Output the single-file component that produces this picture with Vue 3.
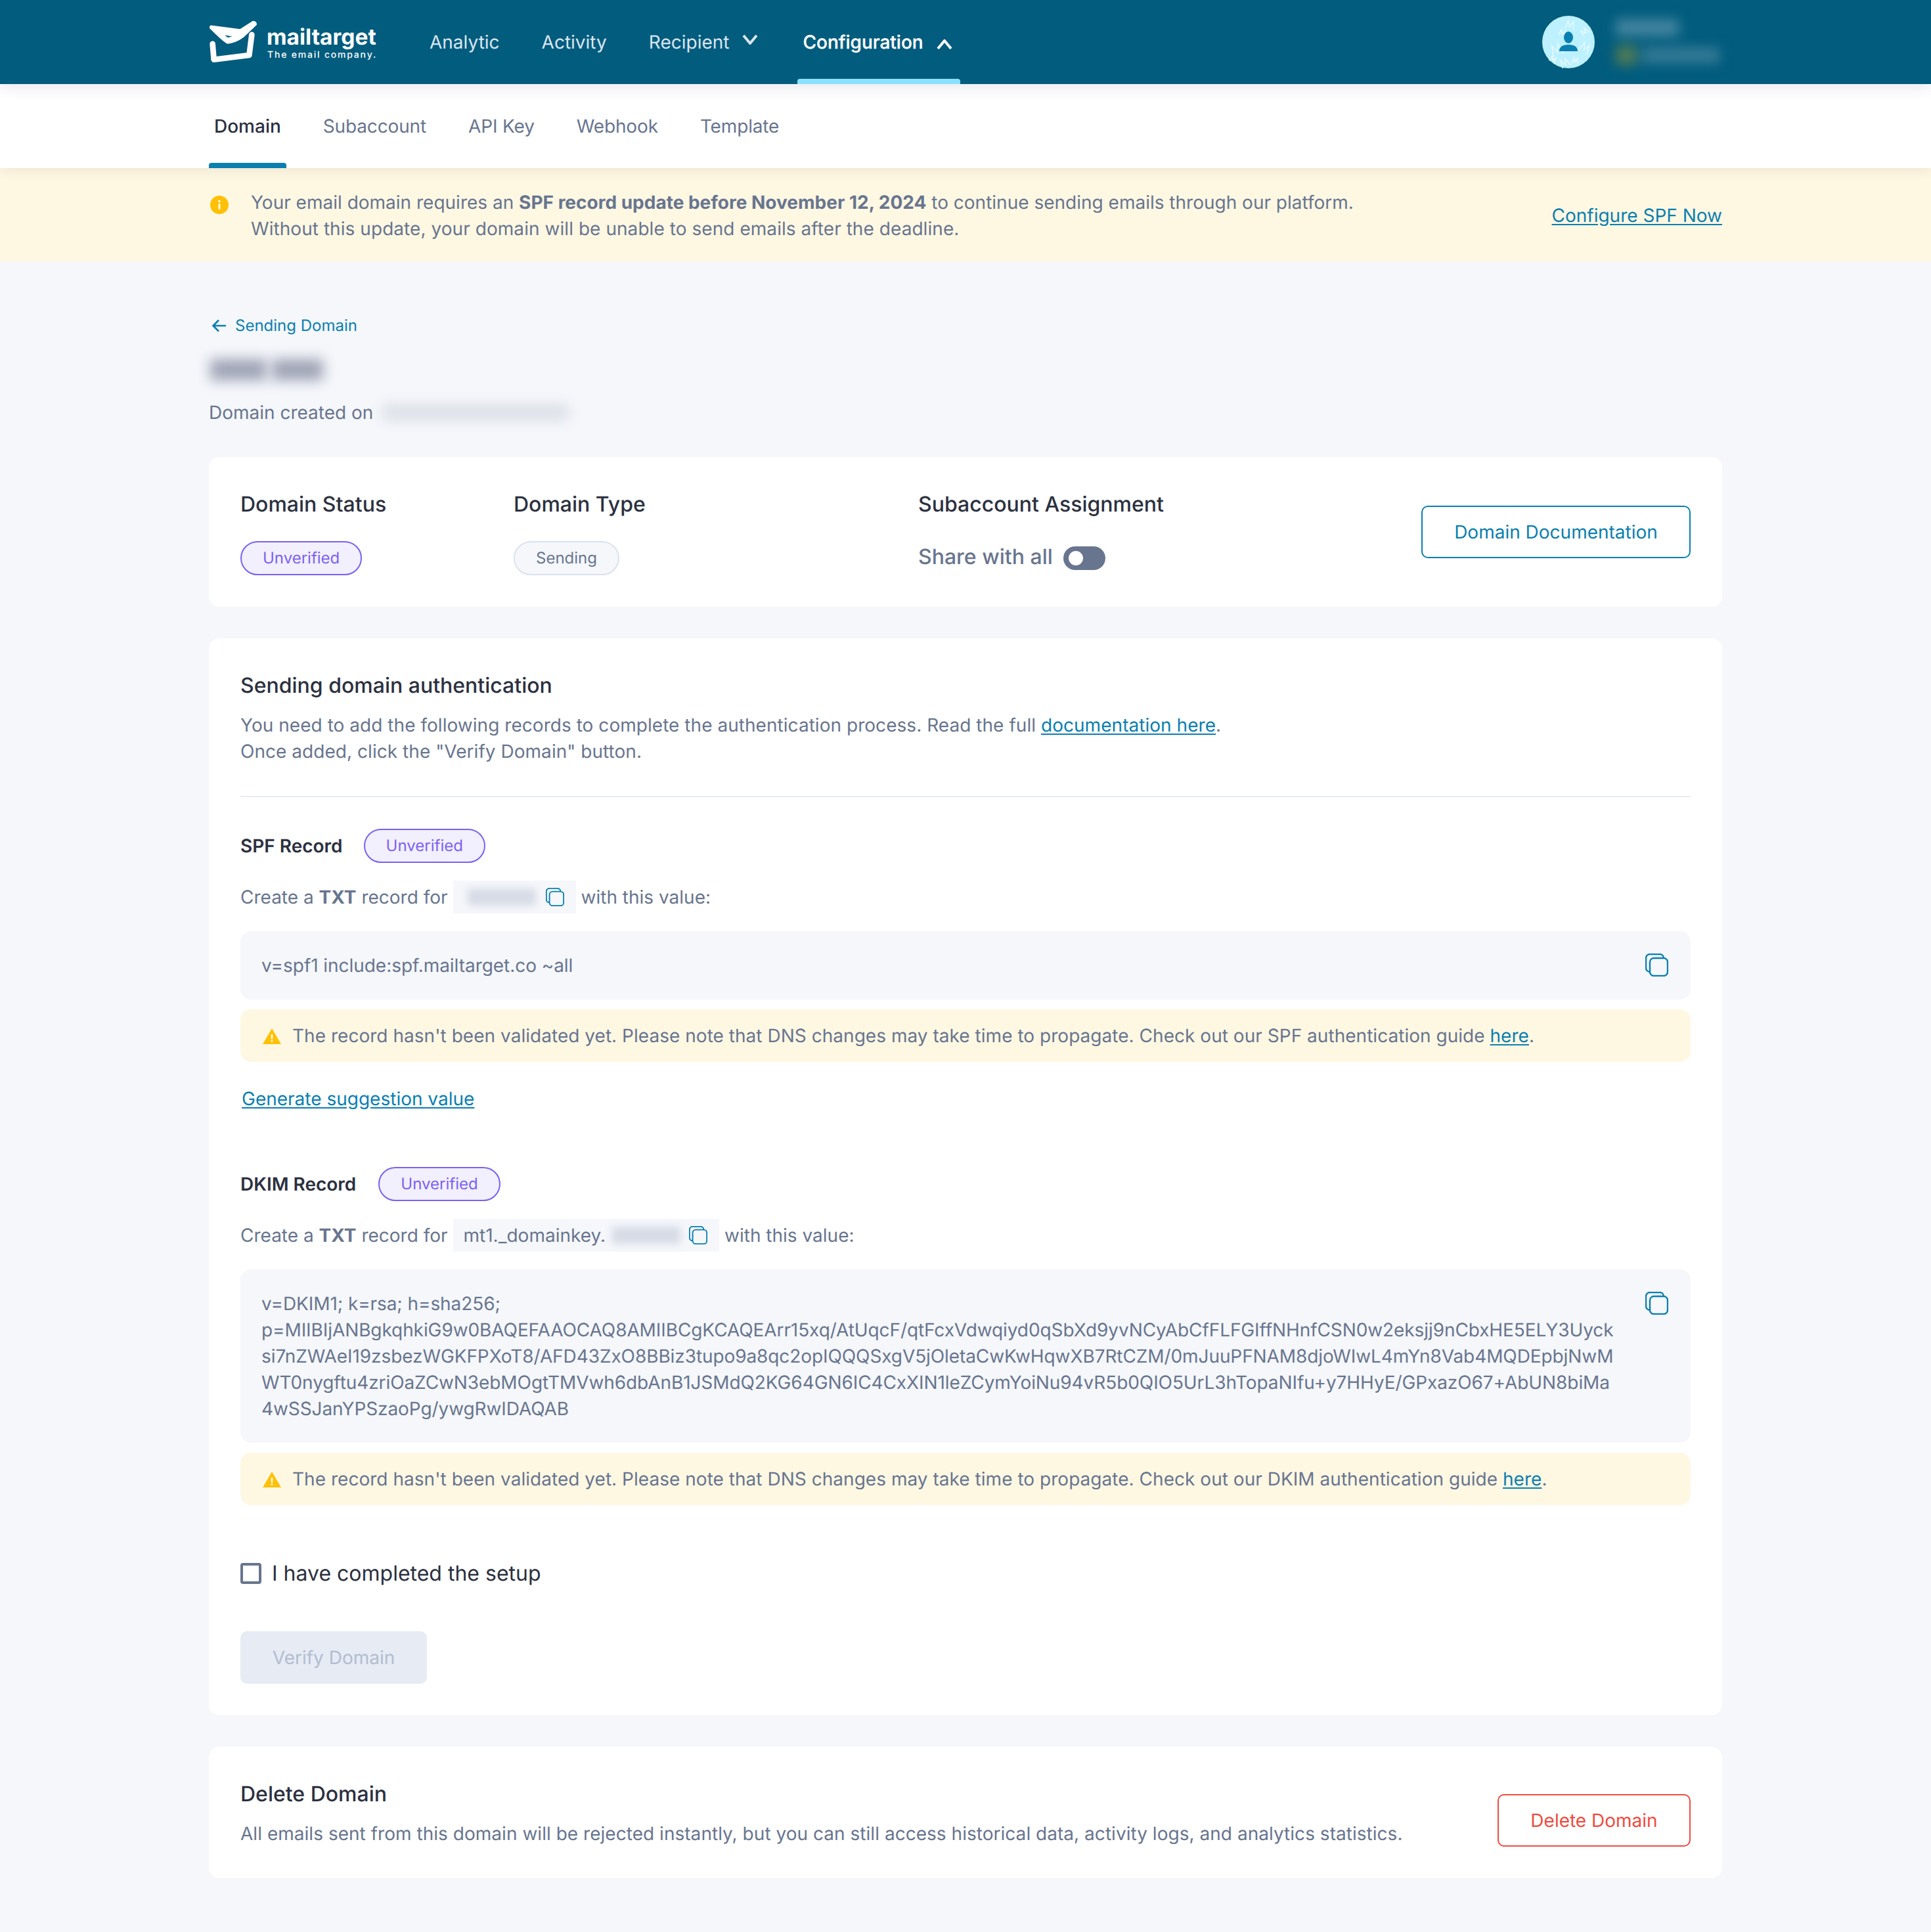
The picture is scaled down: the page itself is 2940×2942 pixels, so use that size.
<script setup>
const navItems = [
  { label: 'Analytic' },
  { label: 'Activity' },
  { label: 'Recipient', chevron: 'down' },
  { label: 'Configuration', chevron: 'up', active: true },
]
const tabs = ['Domain', 'Subaccount', 'API Key', 'Webhook', 'Template']
const dkimLines = [
  'v=DKIM1; k=rsa; h=sha256;',
  'p=MIIBIjANBgkqhkiG9w0BAQEFAAOCAQ8AMIIBCgKCAQEArr15xq/AtUqcF/qtFcxVdwqiyd0qSbXd9yvNCyAbCfFLFGIffNHnfCSN0w2eksjj9nCbxHE5ELY3Uyck',
  'si7nZWAeI19zsbezWGKFPXoT8/AFD43ZxO8BBiz3tupo9a8qc2opIQQQSxgV5jOletaCwKwHqwXB7RtCZM/0mJuuPFNAM8djoWIwL4mYn8Vab4MQDEpbjNwM',
  'WT0nygftu4zriOaZCwN3ebMOgtTMVwh6dbAnB1JSMdQ2KG64GN6IC4CxXIN1leZCymYoiNu94vR5b0QIO5UrL3hTopaNIfu+y7HHyE/GPxazO67+AbUN8biMa',
  '4wSSJanYPSzaoPg/ywgRwIDAQAB',
]
const avatarMarks = [
  { x: 14, y: 44, s: 16, r: -20 }, { x: 58, y: 42, s: 14, r: 30 }, { x: 26, y: 22, s: 9, r: 20 },
  { x: 36, y: 8, s: 13, r: 10 }, { x: 60, y: 20, s: 10, r: -40 }, { x: 28, y: 66, s: 13, r: -25 },
  { x: 46, y: 64, s: 9, r: 10 }, { x: 12, y: 62, s: 9, r: 30 },
]
</script>

<template>
  <div class="page">
    <header class="topbar">
      <div class="topbar-inner">
        <div class="brand">
          <svg class="brand-mark" viewBox="22 12 226 196" aria-hidden="true">
            <path d="M28 48 Q26 34 40 35 L168 52 L226 15 Q246 14 245 32 L185 90 Q150 116 110 120 Q90 110 28 48 Z" fill="#fff" />
            <path d="M98 80 L132 86 L112 91 Z" fill="#025c7e" />
            <path d="M42 120 L48 192 L210 172 L222 78" fill="none" stroke="#fff" stroke-width="26" stroke-linecap="round" stroke-linejoin="round" />
          </svg>
          <div class="brand-text">
            <div class="brand-name">mailtarget</div>
            <div class="brand-tag">The email company.</div>
          </div>
        </div>
        <nav class="mainnav">
          <a v-for="item in navItems" :key="item.label" class="mainnav-item" :class="{ active: item.active, 'has-down': item.chevron === 'down' }">
            <span>{{ item.label }}</span>
            <svg v-if="item.chevron === 'down'" class="chev chev-down" viewBox="0 0 24 16"><path d="M2 2 L12 14 L22 2" /></svg>
            <svg v-if="item.chevron === 'up'" class="chev chev-up" viewBox="0 0 24 16"><path d="M2 14 L12 2 L22 14" /></svg>
          </a>
        </nav>
        <div class="user">
          <div class="avatar">
            <svg viewBox="0 0 80 80" aria-hidden="true">
              <circle cx="40" cy="40" r="40" fill="#bdf1ff" />
              <g fill="none" stroke="#e6faff" stroke-width="1.6">
                <path v-for="(m, i) in avatarMarks" :key="i"
                  :d="`M${m.x} ${m.y + m.s} l${m.s * 0.2} ${-m.s} l${m.s * 0.3} ${m.s * 0.7} l${m.s * 0.3} ${-m.s * 0.7} l${m.s * 0.2} ${m.s}`"
                  :transform="`rotate(${m.r} ${m.x + m.s / 2} ${m.y + m.s / 2})`" />
              </g>
              <ellipse cx="40" cy="33" rx="7" ry="9" fill="#0a7fb0" />
              <path d="M26 54 Q26 44 40 44 Q54 44 54 54 Z" fill="#0a7fb0" />
            </svg>
          </div>
          <div class="user-blur">
            <div class="user-name"></div>
            <div class="user-sub"><span class="user-dot"></span><span class="user-plan"></span></div>
          </div>
        </div>
      </div>
    </header>

    <div class="tabsbar">
      <div class="tabs">
        <a v-for="(t, i) in tabs" :key="t" class="tab" :class="{ active: i === 0 }">{{ t }}</a>
      </div>
    </div>

    <div class="banner">
      <div class="banner-inner">
        <svg class="banner-icon" viewBox="0 0 28 28" aria-hidden="true">
          <circle cx="14" cy="14" r="14" fill="#ffc107" />
          <rect x="12.6" y="12" width="2.8" height="9" rx="1" fill="#fff" />
          <circle cx="14" cy="8.5" r="1.7" fill="#fff" />
        </svg>
        <p class="banner-text">
          Your email domain requires an <strong>SPF record update before November 12, 2024</strong> to continue sending emails through our platform.<br />
          <span class="banner-line2">Without this update, your domain will be unable to send emails after the deadline.</span>
        </p>
        <a class="link banner-link">Configure SPF Now</a>
      </div>
    </div>

    <main class="content">
      <a class="back">
        <svg viewBox="0 0 24 24" aria-hidden="true"><path d="M22 12 H3 M11 3.5 L2.5 12 L11 20.5" /></svg>
        <span>Sending Domain</span>
      </a>
      <div class="domain-name"><span class="blur-name"></span><span class="blur-name blur-name-b"></span></div>
      <div class="created"><span>Domain created on</span><span class="blur-date"></span></div>

      <section class="card summary">
        <div class="col col-status">
          <h3 class="card-title">Domain Status</h3>
          <span class="badge badge-purple">Unverified</span>
        </div>
        <div class="col col-type">
          <h3 class="card-title">Domain Type</h3>
          <span class="badge badge-gray">Sending</span>
        </div>
        <div class="col">
          <h3 class="card-title">Subaccount Assignment</h3>
          <div class="share">
            <span class="share-label">Share with all</span>
            <span class="toggle"><span class="knob"></span></span>
          </div>
        </div>
        <a class="btn btn-outline">Domain Documentation</a>
      </section>

      <section class="card auth">
        <h3 class="card-title">Sending domain authentication</h3>
        <p class="desc">
          You need to add the following records to complete the authentication process. Read the full <a class="link">documentation here</a>.<br />
          Once added, click the "Verify Domain" button.
        </p>
        <hr class="divider" />

        <div class="record-head">
          <span class="record-title">SPF Record</span>
          <span class="badge badge-purple">Unverified</span>
        </div>
        <div class="create-row">
          <span>Create a <strong>TXT</strong> record for</span>
          <span class="chip">
            <span class="blur-chip spf-blur"></span>
            <svg class="copy copy-sm" viewBox="0 0 35 35" aria-hidden="true">
              <rect x="1" y="1" width="27" height="27" rx="6" />
              <rect x="7" y="7" width="27" height="27" rx="6" fill="#f5f7fb" />
            </svg>
          </span>
          <span>with this value:</span>
        </div>
        <div class="valuebox">
          <div class="value">v=spf1 include:spf.mailtarget.co ~all</div>
          <svg class="copy copy-lg" viewBox="0 0 35 35" aria-hidden="true">
            <rect x="1" y="1" width="27" height="27" rx="6" />
            <rect x="7" y="7" width="27" height="27" rx="6" fill="#f5f7fb" />
          </svg>
        </div>
        <div class="warn">
          <svg class="warn-icon" viewBox="0 0 28 24" aria-hidden="true">
            <path d="M14 0 L28 24 H0 Z" fill="#ffc107" />
            <rect x="12.8" y="9" width="2.4" height="7.5" fill="#fff" />
            <rect x="12.8" y="18" width="2.4" height="2.6" fill="#fff" />
          </svg>
          <span>The record hasn't been validated yet. Please note that DNS changes may take time to propagate. Check out our SPF authentication guide <a class="link">here</a>.</span>
        </div>
        <div class="generate"><a class="link">Generate suggestion value</a></div>

        <div class="record-head dkim-head">
          <span class="record-title">DKIM Record</span>
          <span class="badge badge-purple">Unverified</span>
        </div>
        <div class="create-row">
          <span>Create a <strong>TXT</strong> record for</span>
          <span class="chip">
            <span>mt1._domainkey.</span>
            <span class="blur-chip dkim-blur"></span>
            <svg class="copy copy-sm" viewBox="0 0 35 35" aria-hidden="true">
              <rect x="1" y="1" width="27" height="27" rx="6" />
              <rect x="7" y="7" width="27" height="27" rx="6" fill="#f5f7fb" />
            </svg>
          </span>
          <span>with this value:</span>
        </div>
        <div class="valuebox">
          <div class="value">
            <div v-for="line in dkimLines" :key="line" class="value-line">{{ line }}</div>
          </div>
          <svg class="copy copy-lg" viewBox="0 0 35 35" aria-hidden="true">
            <rect x="1" y="1" width="27" height="27" rx="6" />
            <rect x="7" y="7" width="27" height="27" rx="6" fill="#f5f7fb" />
          </svg>
        </div>
        <div class="warn">
          <svg class="warn-icon" viewBox="0 0 28 24" aria-hidden="true">
            <path d="M14 0 L28 24 H0 Z" fill="#ffc107" />
            <rect x="12.8" y="9" width="2.4" height="7.5" fill="#fff" />
            <rect x="12.8" y="18" width="2.4" height="2.6" fill="#fff" />
          </svg>
          <span>The record hasn't been validated yet. Please note that DNS changes may take time to propagate. Check out our DKIM authentication guide <a class="link">here</a>.</span>
        </div>

        <label class="check">
          <span class="checkbox"></span>
          <span>I have completed the setup</span>
        </label>
        <a class="btn btn-disabled">Verify Domain</a>
      </section>

      <section class="card danger">
        <div>
          <h3 class="card-title">Delete Domain</h3>
          <p class="danger-text">All emails sent from this domain will be rejected instantly, but you can still access historical data, activity logs, and analytics statistics.</p>
        </div>
        <a class="btn btn-danger">Delete Domain</a>
      </section>
    </main>
  </div>
</template>

<style>
html, body { margin: 0; background: #f5f7fb; }
</style>

<style scoped>
.page {
  font-family: Inter, "Liberation Sans", sans-serif;
  font-size: 28px;
  line-height: 40px;
  color: #68758f;
  background: #f5f7fb;
  min-height: 2942px;
  text-rendering: geometricPrecision;
  font-optical-sizing: none;
}
p, h3 { margin: 0; }
strong { font-weight: 700; }

.topbar { background: #025c7e; height: 128px; position: relative; z-index: 3; box-shadow: 0 6px 20px rgba(40, 50, 90, .1); }
.topbar-inner { height: 128px; padding: 0 318px; display: flex; align-items: stretch; box-sizing: border-box; }
.brand { display: flex; align-items: center; gap: 14px; width: 256px; margin-right: 72px; color: #fff; }
.brand-mark { width: 75px; height: 65px; margin-left: -1px; margin-top: -1px; flex: none; }
.brand-text { margin-top: 4px; }
.brand-name { font-size: 33.5px; line-height: 36px; font-weight: 700; }
.brand-tag { font-size: 14px; line-height: 18px; font-weight: 500; letter-spacing: 1.8px; white-space: nowrap; margin-left: 1px; }
.mainnav { display: flex; gap: 48px; }
.mainnav-item { display: flex; align-items: flex-start; gap: 20px; padding: 44px 8px 0; color: #dbe5f0; position: relative; height: 128px; box-sizing: border-box; }
.mainnav-item.has-down { padding-right: 12px; }
.mainnav-item.active { color: #fff; font-weight: 500; -webkit-text-stroke: 0.3px #fff; padding-right: 12px; }
.mainnav-item.active::after { content: ""; position: absolute; left: 0; right: 0; bottom: 0; height: 8px; background: #8be0ff; border-radius: 4px 4px 0 0; }
.chev { width: 24px; height: 16px; fill: none; stroke-width: 4; }
.chev-down { stroke: #dbe5f0; margin-top: 8px; }
.chev-up { stroke: #fff; margin-top: 16px; }
.user { margin-left: auto; display: flex; align-items: center; gap: 32px; position: relative; left: 30px; width: 304px; }
.avatar { width: 80px; height: 80px; flex: none; }
.avatar svg { display: block; width: 80px; height: 80px; }
.user-blur { filter: blur(9px); }
.user-name { width: 96px; height: 26px; background: #43859f; }
.user-sub { display: flex; gap: 8px; margin-top: 14px; align-items: center; }
.user-dot { width: 32px; height: 30px; background: #4e7a55; }
.user-plan { width: 118px; height: 24px; background: #357a96; }

.tabsbar { background: #fff; height: 128px; position: relative; z-index: 2; box-shadow: 0 4px 16px rgba(70, 70, 70, .1); }
.tabs { padding: 0 318px; display: flex; gap: 48px; height: 128px; }
.tab { padding: 0 8px; line-height: 128px; font-size: 28px; color: #68758f; position: relative; letter-spacing: -0.15px; }
.tab.active { color: #2b3040; font-weight: 500; letter-spacing: 0; }
.tab.active::after { content: ""; position: absolute; left: 0; right: 0; bottom: 0; height: 8px; background: #0a7fb0; border-radius: 4px 4px 0 0; }

.banner { background: #fef8e3; height: 142px; }
.banner-inner { padding: 32px 318px; display: flex; align-items: flex-start; }
.banner-icon { width: 28px; height: 28px; flex: none; margin: 10px 34px 0 2px; }
.banner-text { flex: 1; }
.banner-line2 { letter-spacing: 0.055px; }
.banner-link { margin-top: 20px; white-space: nowrap; }
.link { color: #0a7fb0; text-decoration: underline; text-underline-offset: 3px; font-weight: 400; }

.content { padding: 82px 318px 82px; }
.back { display: flex; align-items: center; gap: 12px; color: #0a7fb0; font-size: 24px; line-height: 32px; padding-left: 4px; }
.back svg { width: 24px; height: 24px; fill: none; stroke: #0a7fb0; stroke-width: 2.6; }
.domain-name { height: 58px; margin-top: 22px; display: flex; align-items: center; gap: 8px; }
.blur-name { display: block; width: 86px; height: 32px; background: #9da2b4; filter: blur(10px); margin-left: 2px; }
.blur-name-b { width: 78px; margin-left: 0; }
.created { display: flex; align-items: center; gap: 14px; height: 44px; margin-top: 14px; }
.blur-date { display: block; width: 284px; height: 26px; background: #dde0e8; filter: blur(10px); }

.card { background: #fff; border-radius: 16px; padding: 48px; margin-top: 48px; }
.card-title { font-size: 32px; line-height: 48px; font-weight: 500; color: #2b3040; }
.summary { display: flex; align-items: center; margin-top: 46px; }
.col { display: flex; flex-direction: column; align-items: flex-start; gap: 32px; }
.col-status { width: 416px; }
.col-type { width: 616px; }
.badge { display: inline-flex; align-items: center; height: 52px; box-sizing: border-box; padding: 0 32px; border-radius: 26px; border: 2px solid; font-size: 24px; line-height: 1; white-space: nowrap; }
.badge-purple { background: #f2efff; border-color: #7b61f0; color: #7b61f0; }
.badge-gray { background: #f5f7fb; border-color: #dbe2ef; color: #68758f; }
.share { display: flex; align-items: center; gap: 16px; height: 52px; font-size: 32px; font-weight: 500; }
.share-label { margin-top: -4px; }
.toggle { width: 64px; height: 36px; border-radius: 18px; background: #68758f; display: flex; align-items: center; padding-left: 8px; box-sizing: border-box; }
.knob { width: 22px; height: 22px; border-radius: 50%; background: #fff; }
.btn { display: inline-flex; align-items: center; justify-content: center; height: 80px; box-sizing: border-box; border-radius: 10px; font-weight: 400; white-space: nowrap; }
.btn-outline { margin-left: auto; width: 410px; border: 2px solid #0a7fb0; color: #0a7fb0; }

.desc { margin-top: 16px; letter-spacing: 0.04px; }
.divider { border: 0; border-top: 2px solid #e9ecf2; margin: 48px 0; }
.record-head { display: flex; align-items: center; gap: 32px; height: 52px; }
.record-title { font-weight: 600; color: #2b3040; }
.dkim-head { margin-top: 84px; gap: 34px; }
.create-row { display: flex; align-items: center; gap: 8px; height: 56px; margin-top: 24px; white-space: nowrap; }
.chip { display: flex; align-items: center; height: 50px; background: #f5f7fb; padding: 0 18px 0 16px; }
.blur-chip { display: block; height: 26px; background: #d6dbe5; filter: blur(6px); width: 104px; }
.spf-blur { margin: 0 15px 0 6px; }
.dkim-blur { margin: 0 13px 0 10px; }
.copy { fill: none; stroke: #0a7fb0; stroke-width: 2.4; flex: none; }
.copy-sm { width: 28px; height: 28px; }
.copy-lg { width: 35px; height: 35px; position: absolute; right: 34px; top: 34px; }
.valuebox { position: relative; background: #f5f7fb; border-radius: 16px; padding: 32px; margin-top: 24px; }
.value { letter-spacing: -0.05px; }
.value-line { white-space: nowrap; letter-spacing: -0.09px; }
.warn { display: flex; align-items: center; gap: 17px; height: 80px; background: #fef8e3; border-radius: 16px; padding: 0 32px; margin-top: 15px; letter-spacing: 0.03px; }
.warn-icon { width: 28px; height: 24px; flex: none; margin-left: 2px; margin-top: 2px; }
.generate { margin-top: 36px; padding-left: 2px; }
.check { display: flex; align-items: center; gap: 16px; height: 48px; margin-top: 80px; font-size: 32px; color: #2b3040; }
.checkbox { width: 32px; height: 32px; border: 4px solid #68758f; border-radius: 4px; box-sizing: border-box; background: #fff; }
.btn-disabled { width: 284px; margin-top: 64px; background: #e6ebf4; color: #b3bdd0; }
.danger { display: flex; align-items: flex-end; justify-content: space-between; }
.danger-text { margin-top: 16px; letter-spacing: 0.03px; }
.btn-danger { width: 294px; border: 2px solid #ee4c3f; color: #ee4c3f; }
</style>
